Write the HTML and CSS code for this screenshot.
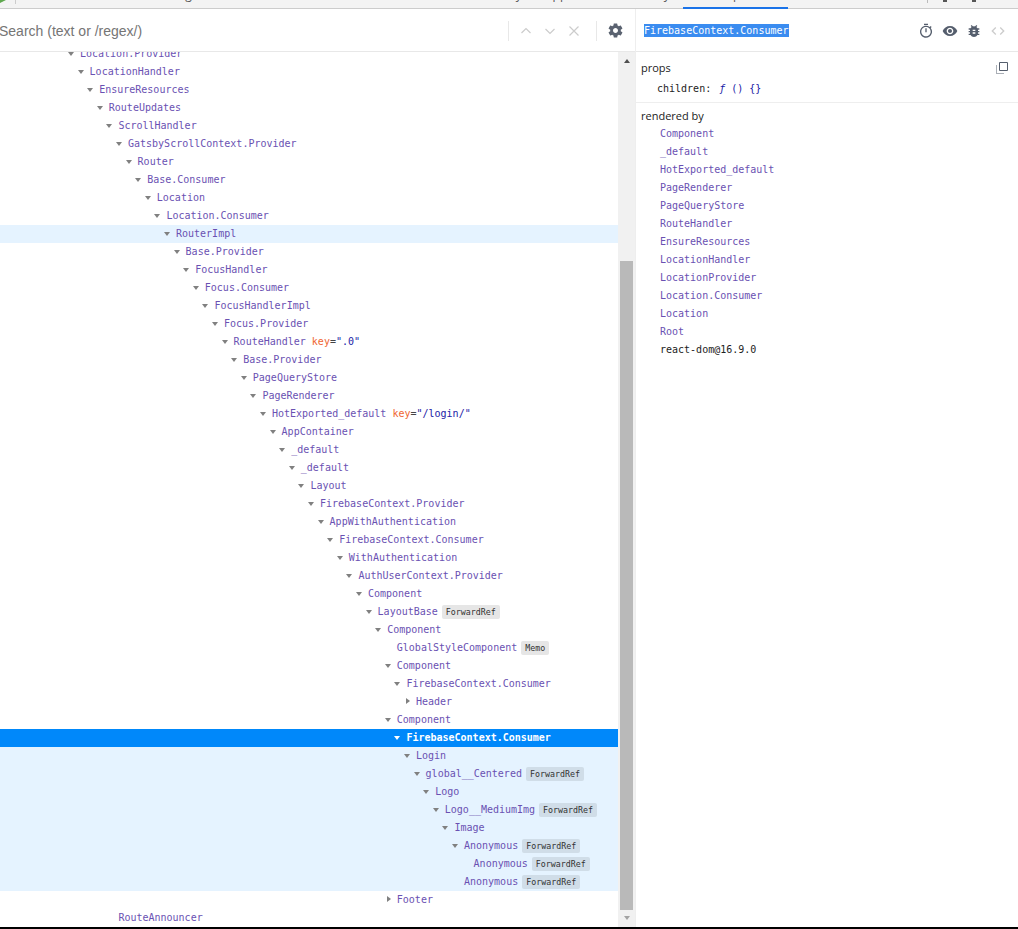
FILE: index.html
```html
<!DOCTYPE html>
<html lang="en">
<head>
<meta charset="utf-8">
<title>Components</title>
<link rel="stylesheet" href="styles.css">
</head>
<body>
<div class="app">
  <div class="tabstrip">
    <div class="tab t-favicon"><svg class="favicon" viewBox="0 0 6 3"><path d="M0 3 L6 0 L0 0Z"/></svg></div>
    <div class="tab t-sep"></div>
    <div class="tab t-debug"><span>Debug</span></div>
    <div class="tab t-memory"><span>Memory</span></div>
    <div class="tab t-app"><span>Application</span></div>
    <div class="tab t-sec"><span>Security</span></div>
    <div class="tab t-comp"><span>Components</span></div>
    <div class="tab t-prof"></div>
    <div class="tab t-sep2"></div>
    <div class="tab t-dots"><i></i><i></i></div>
  </div>
  <div class="panes">
    <section class="left">
      <header class="searchbar">
        <div class="search-text">Search (text or /regex/)</div>
        <div class="search-tools">
          <span class="vsep"></span>
          <svg class="ico-s" viewBox="0 0 16 16"><path d="M3.5 10 L8 5.5 L12.5 10"/></svg>
          <svg class="ico-s" viewBox="0 0 16 16"><path d="M3.5 6 L8 10.5 L12.5 6"/></svg>
          <svg class="ico-s" viewBox="0 0 16 16"><path d="M3.500 3.500 L12.500 12.500 M12.500 3.500 L3.500 12.500"/></svg>
          <span class="vsep vsep2"></span>
          <svg class="gear" viewBox="0 0 24 24"><path d="M19.43 12.98c.04-.32.07-.64.07-.98s-.03-.66-.07-.98l2.11-1.65c.19-.15.24-.42.12-.64l-2-3.46c-.12-.22-.39-.3-.61-.22l-2.49 1c-.52-.4-1.08-.73-1.69-.98l-.38-2.65A.488.488 0 0 0 14 2h-4c-.25 0-.46.18-.49.42l-.38 2.65c-.61.25-1.17.59-1.69.98l-2.49-1c-.23-.09-.49 0-.61.22l-2 3.46c-.13.22-.07.49.12.64l2.11 1.65c-.04.32-.07.65-.07.98s.03.66.07.98l-2.11 1.65c-.19.15-.24.42-.12.64l2 3.46c.12.22.39.3.61.22l2.49-1c.52.4 1.08.73 1.69.98l.38 2.65c.03.24.24.42.49.42h4c.25 0 .46-.18.49-.42l.38-2.65c.61-.25 1.17-.59 1.69-.98l2.49 1c.23.09.49 0 .61-.22l2-3.46c.12-.22.07-.49-.12-.64l-2.11-1.65zM12 15.5c-1.93 0-3.5-1.57-3.5-3.5s1.57-3.5 3.5-3.5 3.5 1.57 3.5 3.5-1.57 3.5-3.5 3.5z"/></svg>
        </div>
      </header>
      <div class="treewrap">
        <div class="tree">
          <div class="row" style="--d:0"><b></b><span class="nm">Location.Provider</span></div>
          <div class="row" style="--d:1"><b></b><span class="nm">LocationHandler</span></div>
          <div class="row" style="--d:2"><b></b><span class="nm">EnsureResources</span></div>
          <div class="row" style="--d:3"><b></b><span class="nm">RouteUpdates</span></div>
          <div class="row" style="--d:4"><b></b><span class="nm">ScrollHandler</span></div>
          <div class="row" style="--d:5"><b></b><span class="nm">GatsbyScrollContext.Provider</span></div>
          <div class="row" style="--d:6"><b></b><span class="nm">Router</span></div>
          <div class="row" style="--d:7"><b></b><span class="nm">Base.Consumer</span></div>
          <div class="row" style="--d:8"><b></b><span class="nm">Location</span></div>
          <div class="row" style="--d:9"><b></b><span class="nm">Location.Consumer</span></div>
          <div class="row hl" style="--d:10"><b></b><span class="nm">RouterImpl</span></div>
          <div class="row" style="--d:11"><b></b><span class="nm">Base.Provider</span></div>
          <div class="row" style="--d:12"><b></b><span class="nm">FocusHandler</span></div>
          <div class="row" style="--d:13"><b></b><span class="nm">Focus.Consumer</span></div>
          <div class="row" style="--d:14"><b></b><span class="nm">FocusHandlerImpl</span></div>
          <div class="row" style="--d:15"><b></b><span class="nm">Focus.Provider</span></div>
          <div class="row" style="--d:16"><b></b><span class="nm">RouteHandler</span><span class="key">key</span><span class="eq">=</span><span class="val">".0"</span></div>
          <div class="row" style="--d:17"><b></b><span class="nm">Base.Provider</span></div>
          <div class="row" style="--d:18"><b></b><span class="nm">PageQueryStore</span></div>
          <div class="row" style="--d:19"><b></b><span class="nm">PageRenderer</span></div>
          <div class="row" style="--d:20"><b></b><span class="nm">HotExported_default</span><span class="key">key</span><span class="eq">=</span><span class="val">"/login/"</span></div>
          <div class="row" style="--d:21"><b></b><span class="nm">AppContainer</span></div>
          <div class="row" style="--d:22"><b></b><span class="nm">_default</span></div>
          <div class="row" style="--d:23"><b></b><span class="nm">_default</span></div>
          <div class="row" style="--d:24"><b></b><span class="nm">Layout</span></div>
          <div class="row" style="--d:25"><b></b><span class="nm">FirebaseContext.Provider</span></div>
          <div class="row" style="--d:26"><b></b><span class="nm">AppWithAuthentication</span></div>
          <div class="row" style="--d:27"><b></b><span class="nm">FirebaseContext.Consumer</span></div>
          <div class="row" style="--d:28"><b></b><span class="nm">WithAuthentication</span></div>
          <div class="row" style="--d:29"><b></b><span class="nm">AuthUserContext.Provider</span></div>
          <div class="row" style="--d:30"><b></b><span class="nm">Component</span></div>
          <div class="row" style="--d:31"><b></b><span class="nm">LayoutBase</span><em>ForwardRef</em></div>
          <div class="row" style="--d:32"><b></b><span class="nm">Component</span></div>
          <div class="row leaf" style="--d:33"><b></b><span class="nm">GlobalStyleComponent</span><em>Memo</em></div>
          <div class="row" style="--d:33"><b></b><span class="nm">Component</span></div>
          <div class="row" style="--d:34"><b></b><span class="nm">FirebaseContext.Consumer</span></div>
          <div class="row closed" style="--d:35"><b></b><span class="nm">Header</span></div>
          <div class="row" style="--d:33"><b></b><span class="nm">Component</span></div>
          <div class="row sel" style="--d:34"><b></b><span class="nm">FirebaseContext.Consumer</span></div>
          <div class="row hl" style="--d:35"><b></b><span class="nm">Login</span></div>
          <div class="row hl" style="--d:36"><b></b><span class="nm">global__Centered</span><em>ForwardRef</em></div>
          <div class="row hl" style="--d:37"><b></b><span class="nm">Logo</span></div>
          <div class="row hl" style="--d:38"><b></b><span class="nm">Logo__MediumImg</span><em>ForwardRef</em></div>
          <div class="row hl" style="--d:39"><b></b><span class="nm">Image</span></div>
          <div class="row hl" style="--d:40"><b></b><span class="nm">Anonymous</span><em>ForwardRef</em></div>
          <div class="row hl leaf" style="--d:41"><b></b><span class="nm">Anonymous</span><em>ForwardRef</em></div>
          <div class="row hl leaf" style="--d:40"><b></b><span class="nm">Anonymous</span><em>ForwardRef</em></div>
          <div class="row closed" style="--d:33"><b></b><span class="nm">Footer</span></div>
          <div class="row leaf" style="--d:4"><b></b><span class="nm">RouteAnnouncer</span></div>
        </div>
        <div class="scrollbar">
          <i class="sb-up"></i>
          <div class="sb-thumb"></div>
          <i class="sb-down"></i>
        </div>
      </div>
    </section>
    <aside class="right">
      <header class="detail-head">
        <span class="selname">FirebaseContext.Consumer</span>
        <div class="head-icons">
          <svg class="hi" viewBox="0 0 24 24"><path d="M15 1H9v2h6V1zm-4 13h2V8h-2v6zm8.03-6.61l1.42-1.42c-.43-.51-.9-.99-1.41-1.41l-1.42 1.42A8.962 8.962 0 0 0 12 4c-4.97 0-9 4.03-9 9s4.02 9 9 9a8.994 8.994 0 0 0 7.03-14.61zM12 20c-3.87 0-7-3.13-7-7s3.13-7 7-7 7 3.13 7 7-3.13 7-7 7z"/></svg>
          <svg class="hi" viewBox="0 0 24 24"><path d="M12 4.5C7 4.5 2.73 7.61 1 12c1.73 4.39 6 7.5 11 7.5s9.27-3.11 11-7.5c-1.73-4.39-6-7.5-11-7.500zM12 17c-2.76 0-5-2.24-5-5s2.24-5 5-5 5 2.24 5 5-2.24 5-5 5zm0-8c-1.66 0-3 1.34-3 3s1.34 3 3 3 3-1.34 3-3-1.34-3-3-3z"/></svg>
          <svg class="hi" viewBox="0 0 24 24"><path d="M20 8h-2.81a5.985 5.985 0 0 0-1.82-1.96L17 4.41 15.59 3l-2.17 2.17C12.96 5.06 12.49 5 12 5s-.96.06-1.41.17L8.41 3 7 4.41l1.62 1.63C7.88 6.55 7.26 7.22 6.81 8H4v2h2.09c-.05.33-.09.66-.09 1v1H4v2h2v1c0 .34.04.67.09 1H4v2h2.81c1.04 1.79 2.97 3 5.19 3s4.15-1.21 5.19-3H20v-2h-2.09c.05-.33.09-.66.09-1v-1h2v-2h-2v-1c0-.34-.04-.67-.09-1H20V8zm-6 8h-4v-2h4v2zm0-4h-4v-2h4v2z"/></svg>
          <svg class="hi code" viewBox="0 0 24 24"><path d="M9.4 16.6 4.8 12l4.6-4.6L8 6l-6 6 6 6 1.400-1.400zm5.200 0 4.600-4.600-4.600-4.600L16 6l6 6-6 6-1.400-1.400z"/></svg>
        </div>
      </header>
      <section class="props">
        <div class="sec-title">props</div>
        <svg class="copy" viewBox="0 0 12 12"><path class="copy-box" d="M3.500.5h8v8h-8z"/><path class="copy-dots" d="M.5 3.500v8h8"/></svg>
        <div class="prop"><span class="pname">children</span>: <span class="pval"><i>ƒ</i> () {}</span></div>
      </section>
      <section class="owners">
        <div class="sec-title">rendered by</div>
        <ul class="ownerlist">
          <li>Component</li>
          <li>_default</li>
          <li>HotExported_default</li>
          <li>PageRenderer</li>
          <li>PageQueryStore</li>
          <li>RouteHandler</li>
          <li>EnsureResources</li>
          <li>LocationHandler</li>
          <li>LocationProvider</li>
          <li>Location.Consumer</li>
          <li>Location</li>
          <li>Root</li>
          <li class="pkg">react-dom@16.9.0</li>
        </ul>
      </section>
    </aside>
  </div>
  <div class="baseline"></div>
</div>
</body>
</html>
```

FILE: styles.css
```css
* { box-sizing: border-box; }
html, body { margin: 0; padding: 0; height: 100%; background: #fff; overflow: hidden; }
body { font-family: "DejaVu Sans Mono", monospace; font-size: 10px; color: #222; }
.app { display: flex; flex-direction: column; height: 929px; width: 1018px; }

/* clipped devtools tab strip */
.tabstrip { display: flex; flex: none; height: 9px; background: #f3f3f3; box-shadow: inset 0 -1px 0 #ccc; overflow: hidden; font-family: "Open Sans", sans-serif; font-size: 12px; color: #555; }
.tab { flex: none; height: 9px; overflow: hidden; white-space: nowrap; }
.tab span { display: block; line-height: 12px; margin-top: -11px; }
.t-favicon { width: 15px; }
.favicon { display: block; width: 6px; height: 3px; fill: #5fa84f; }
.t-sep { width: 1px; height: 4px; background: #ccc; }
.t-debug { width: 459px; padding-left: 139px; }
.t-memory { width: 70px; }
.t-app { width: 80px; }
.t-sec { width: 58px; }
.t-comp { width: 105px; padding-left: 24px; box-shadow: inset 0 -2px 0 #1a73e8; }
.t-prof { width: 139px; }
.t-sep2 { width: 1px; height: 3px; background: #bbb; }
.t-dots { display: flex; gap: 25px; padding-left: 15px; }
.t-dots i { width: 4px; height: 2px; background: #555; }

.panes { flex: 1; display: flex; min-height: 0; }
.left { width: 636px; flex: none; display: flex; flex-direction: column; border-right: 1px solid #eee; }
.right { flex: 1; min-width: 0; display: flex; flex-direction: column; }

.searchbar { flex: none; height: 43px; padding-top: 1px; display: flex; align-items: center; border-bottom: 1px solid #e8e8e8; }
.search-text { flex: 1; margin-left: -1px; font: 14px "Liberation Sans", sans-serif; color: #757575; }
.search-tools { display: flex; align-items: center; gap: 8px; padding-right: 11px; }
.vsep { width: 1px; height: 20px; background: #e8e8e8; margin-right: 1px; }
.vsep2 { margin-left: 6px; margin-right: 2px; }
.ico-s { width: 16px; height: 16px; fill: none; stroke: #ccc; stroke-width: 1.2; }
.gear { width: 17px; height: 17px; fill: #5a6270; }

.treewrap { flex: 1; min-height: 0; display: flex; overflow: hidden; }
.tree { flex: 1; min-width: 0; margin-top: -7px; }
.row { display: flex; align-items: center; height: 18px; line-height: 18px; padding-left: calc(70px + var(--d) * 9.6px); color: #222; white-space: pre; }
.row b { flex: none; width: 10px; height: 18px; position: relative; }
.row b::before { content: ""; position: absolute; left: -2px; top: 7px; border-style: solid; border-width: 4px 3.5px 0; border-color: #808080 transparent transparent; }
.row.closed b::before { left: 0; top: 5px; border-width: 3.5px 0 3.5px 4px; border-color: transparent transparent transparent #808080; }
.row.leaf b::before { display: none; }
.nm { color: #6a51b2; }
.key { color: #ef6632; margin-left: 6px; }
.eq { color: #444; }
.val { color: #1a1aa6; }
.row em { font: normal 8.3px "DejaVu Sans Mono", monospace; color: #333; background: #e6e6e6; border-radius: 2px; height: 14px; line-height: 14px; padding: 0 4px; margin-left: 4px; }
.row.hl { background: #e5f3ff; }
.row.hl em { background: #d0dde8; }
.row.sel { background: #0088fa; }
.row.sel .nm { color: #fff; font-weight: bold; }
.row.sel b::before { border-top-color: #fff; }

.scrollbar { flex: none; width: 17px; background: #f1f1f1; display: flex; flex-direction: column; align-items: center; padding-top: 7px; }
.sb-up { width: 0; height: 0; border-style: solid; border-width: 0 3.5px 4px; border-color: transparent transparent #505050; }
.sb-thumb { width: 13px; height: 649px; margin-top: 198px; background: #b9b9b9; }
.sb-down { width: 0; height: 0; margin-top: 6px; border-style: solid; border-width: 4px 3.5px 0; border-color: #a3a3a3 transparent transparent; }

.detail-head { flex: none; height: 43px; padding: 1px 12px 0 8px; display: flex; align-items: center; justify-content: space-between; border-bottom: 1px solid #e8e8e8; }
.selname { background: #3a8cf0; color: #fff; line-height: 13px; }
.head-icons { display: flex; align-items: center; gap: 8px; }
.hi { width: 16px; height: 16px; fill: #555e6d; }
.hi.code { fill: #ccc; }

.props { flex: none; height: 51px; border-bottom: 1px solid #eee; padding: 8px 6px 0 5px; position: relative; }
.sec-title { font: 11px/16px "Open Sans", sans-serif; color: #222; }
.copy { position: absolute; right: 10px; top: 10px; width: 12px; height: 12px; fill: none; }
.copy-box { stroke: #555e6d; }
.copy-dots { stroke: #555e6d; stroke-dasharray: 1 1; }
.prop { margin: 5px 0 0 16px; line-height: 16px; }
.pval { color: #1a1aa6; margin-left: 2px; }
.pval i { font-style: italic; }

.owners { padding: 5px 5px 0; }
.ownerlist { list-style: none; margin: 1px 0 0; padding: 0 0 0 19px; }
.ownerlist li { height: 18px; line-height: 18px; color: #6a51b2; }
.ownerlist li.pkg { color: #222; }

.baseline { flex: none; height: 2px; background: #000; }
```
